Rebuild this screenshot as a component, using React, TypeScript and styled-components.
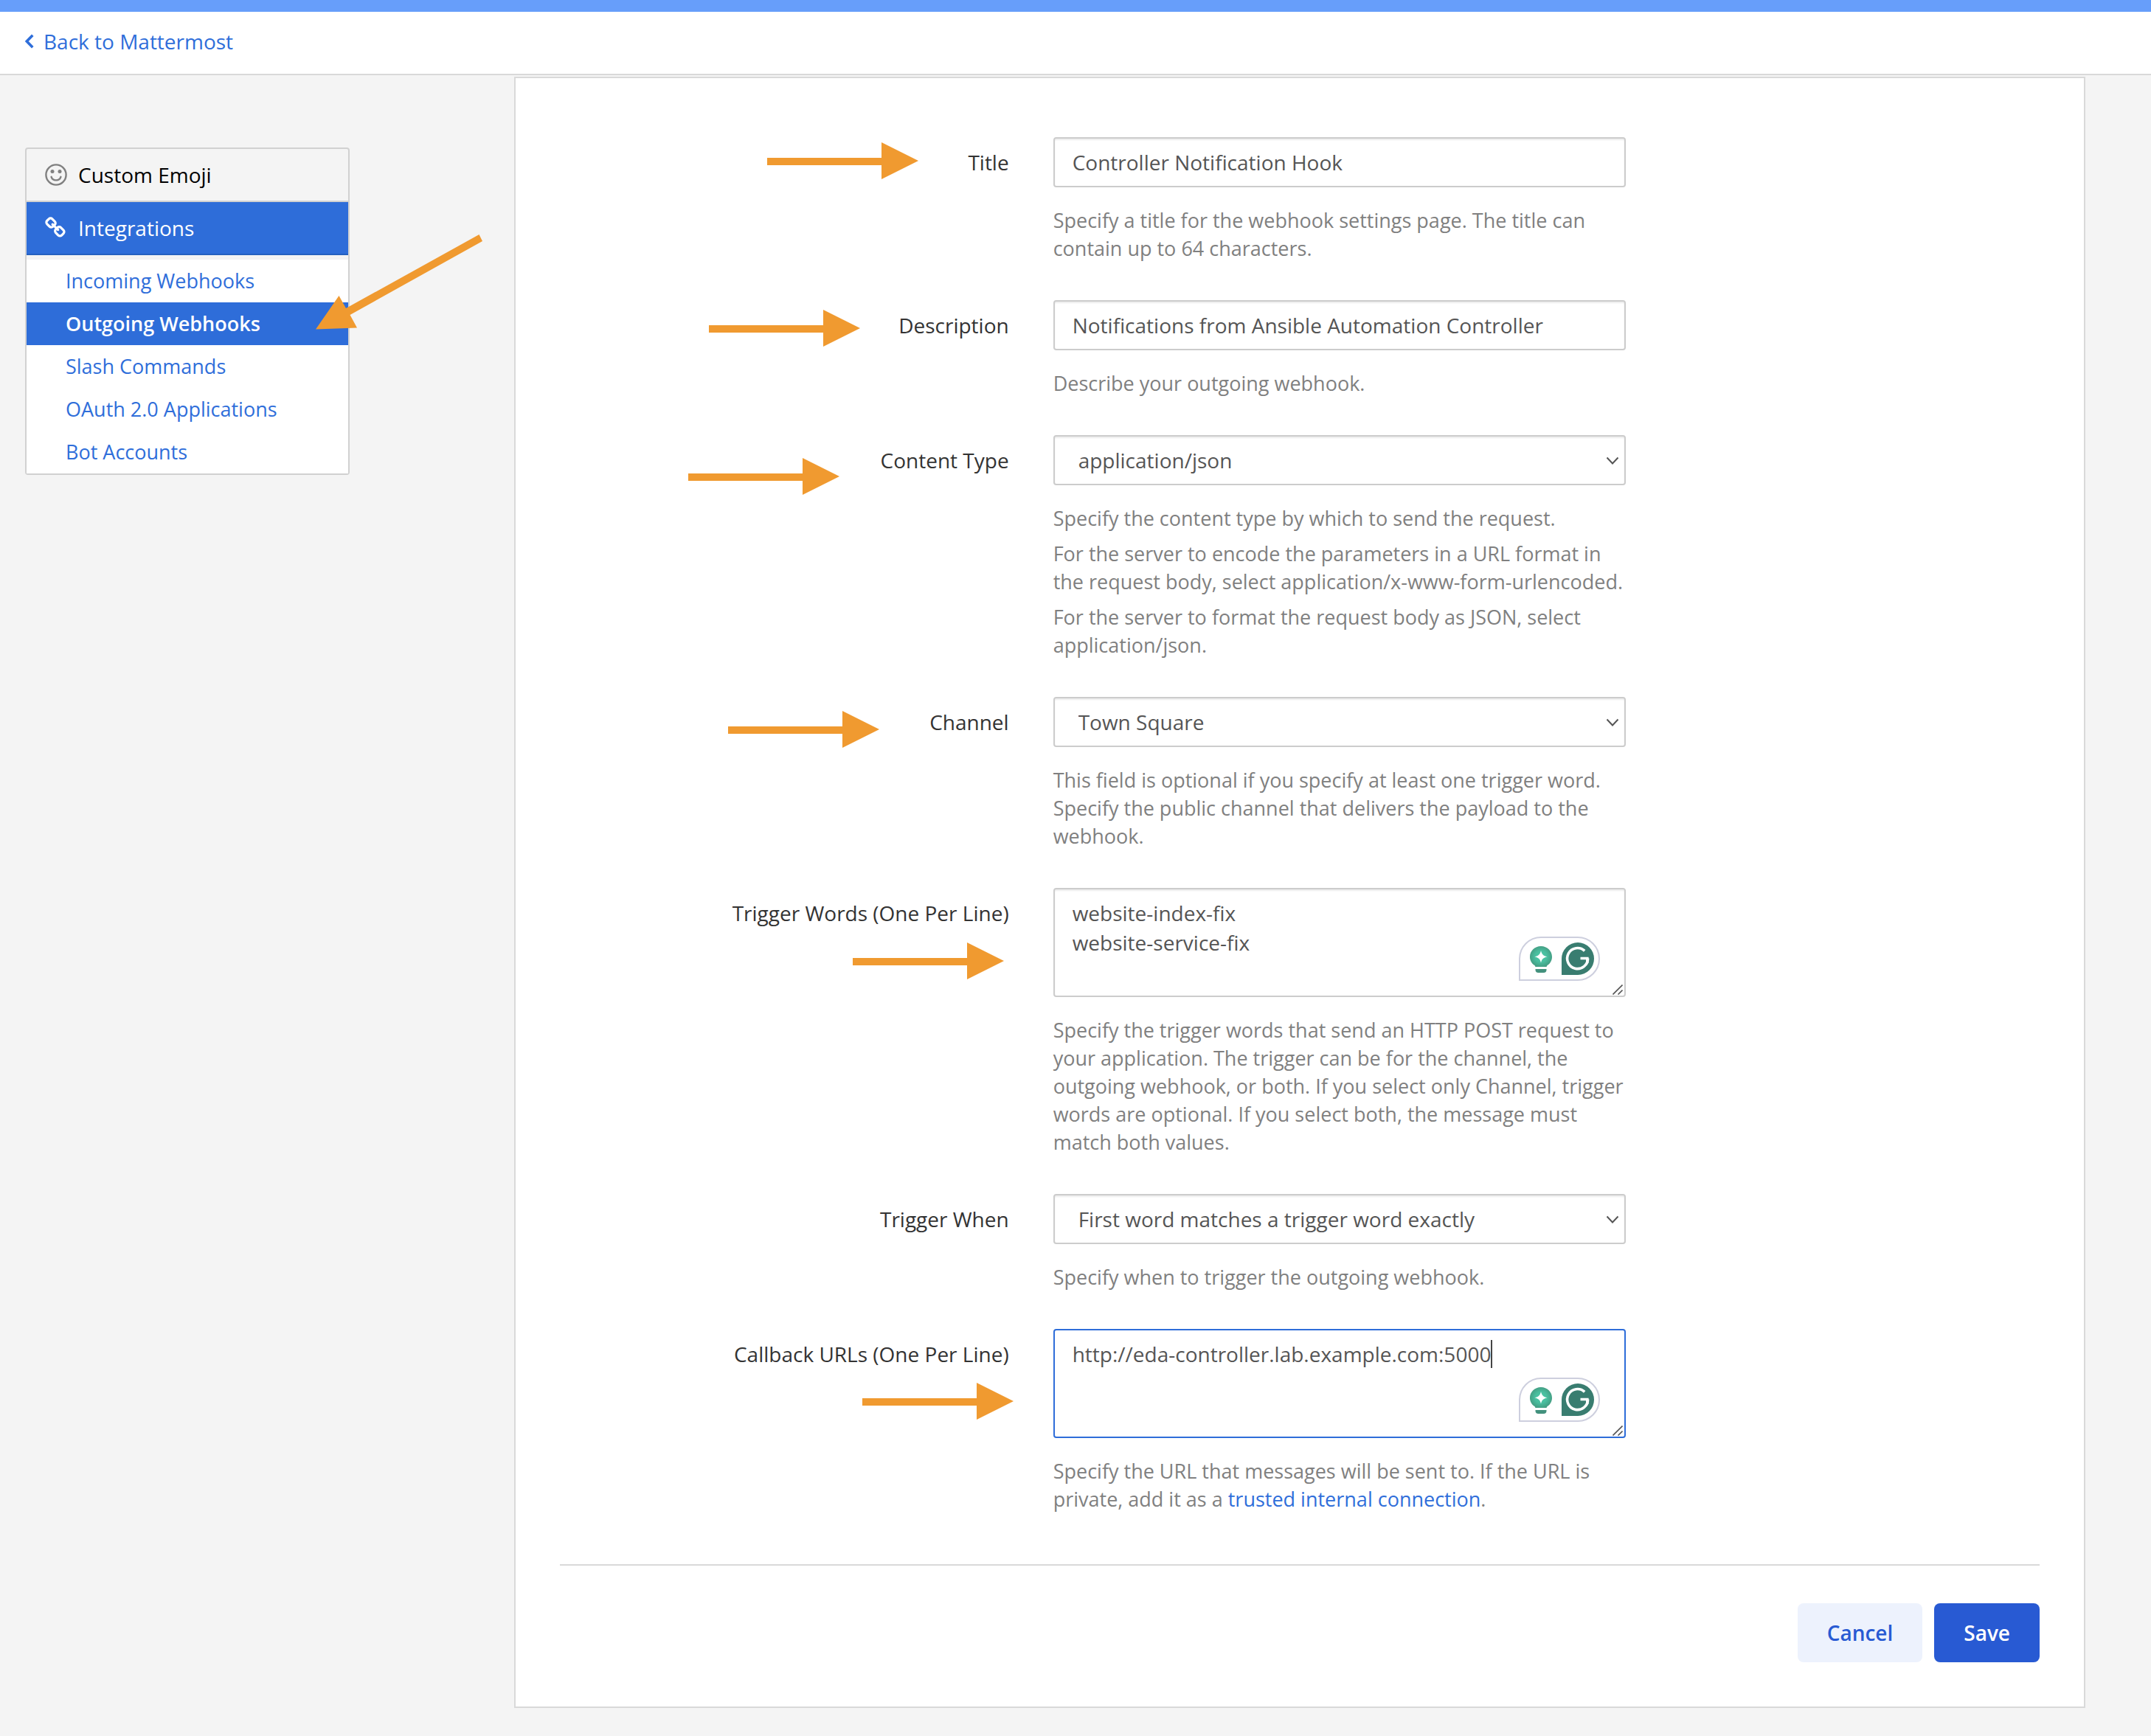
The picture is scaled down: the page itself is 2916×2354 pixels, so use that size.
import React from "react";
import styled, { createGlobalStyle, css } from "styled-components";

const color = {
  page: "#f4f4f4",
  line: "#d9d9d9",
  fieldLine: "#cccccc",
  link: "#2f6eda",
  active: "#2e6dd9",
  primary: "#285ad3",
  label: "#333333",
  value: "#555555",
  help: "#808080",
  arrow: "#f09a30",
};

const GlobalStyle = createGlobalStyle`
  *, *::before, *::after { box-sizing: border-box; }
  html, body { margin: 0; padding: 0; }
  body {
    background: ${color.page};
    color: ${color.label};
    font-family: "Open Sans", sans-serif;
    font-size: 28px;
    line-height: 40px;
  }
  a { color: ${color.link}; text-decoration: none; }
`;

const Page = styled.div`
  min-height: 100vh;
  background: ${color.page};
`;

const AnnouncementBar = styled.div`
  height: 16px;
  background: #679efa;
`;

const Navbar = styled.header`
  display: flex;
  align-items: center;
  height: 86px;
  padding: 0 34px 4px;
  background: #fff;
  border-bottom: 2px solid ${color.line};
`;

const BackLink = styled.a`
  display: flex;
  align-items: center;
  gap: 13px;
`;

const Body = styled.div`
  display: flex;
  align-items: flex-start;
  padding: 2px 89px 38px 34px;
`;

const Sidebar = styled.nav`
  position: relative;
  flex: none;
  width: 440px;
  margin: 96px 223px 0 0;
`;

const Categories = styled.ul`
  margin: 0;
  padding: 0;
  list-style: none;
  border: 2px solid #d1d1d1;
  border-radius: 4px;
`;

const CategoryLink = styled.a<{ $active?: boolean }>`
  display: flex;
  align-items: center;
  gap: 15px;
  height: 72px;
  padding: 0 25px;
  color: #000;
  border-bottom: 2px solid #d1d1d1;
  ${(p) =>
    p.$active &&
    css`
      color: #fff;
      background: ${color.active};
      border-bottom-color: #2560c0;
    `}
`;

const Sections = styled.ul`
  margin: 6px 0 0;
  padding: 0;
  list-style: none;
  background: #fff;
`;

const SectionLink = styled.a<{ $active?: boolean }>`
  display: flex;
  align-items: center;
  height: 58px;
  padding-left: 53px;
  font-size: 27px;
  ${(p) =>
    p.$active &&
    css`
      color: #fff;
      font-weight: 600;
      background: ${color.active};
    `}
`;

const SidebarArrow = styled.svg`
  position: absolute;
  right: -184px;
  top: 110px;
  width: 240px;
  height: 140px;
  pointer-events: none;
`;

const Panel = styled.main`
  flex: 1;
  min-width: 0;
  padding: 80px 60px 60px;
  background: #fff;
  border: 2px solid ${color.line};
`;

const FieldRow = styled.div`
  display: grid;
  grid-template-columns: 4fr 5fr 3fr;
  margin: 0 30px 51px -30px;
  width: 100%;
`;

const LabelCell = styled.div`
  position: relative;
  padding: 14px 30px 0;
  text-align: right;
`;

const FieldCell = styled.div`
  min-width: 0;
  padding: 0 30px;
`;

const ArrowSvg = styled.svg<{ $right: number; $top: number }>`
  position: absolute;
  right: ${(p) => p.$right}px;
  top: ${(p) => p.$top}px;
  width: 205px;
  height: 50px;
  pointer-events: none;
`;

const fieldStyle = css`
  display: block;
  width: 100%;
  margin: 0;
  color: ${color.value};
  font: inherit;
  background: #fff;
  border: 2px solid ${color.fieldLine};
  border-radius: 4px;
  outline: none;
  box-shadow: inset 0 2px 2px rgba(0, 0, 0, 0.075);
`;

const TextInput = styled.input`
  ${fieldStyle}
  height: 68px;
  padding: 12px 24px;
`;

const ControlBox = styled.div`
  position: relative;
`;

const Select = styled.select`
  ${fieldStyle}
  height: 68px;
  padding: 0 56px 0 32px;
  appearance: none;
`;

const SelectChevron = styled.svg`
  position: absolute;
  right: 9px;
  top: 29px;
  width: 18px;
  height: 12px;
  pointer-events: none;
`;

const TextArea = styled.textarea<{ $focused?: boolean }>`
  ${fieldStyle}
  height: 148px;
  padding: 12px 24px;
  resize: none;
  ${(p) =>
    p.$focused &&
    css`
      border-color: ${color.active};
      box-shadow: none;
    `}
`;

const ResizeGrip = styled.svg`
  position: absolute;
  right: 4px;
  bottom: 3px;
  width: 14px;
  height: 14px;
  pointer-events: none;
`;

const Caret = styled.span`
  position: absolute;
  left: 593px;
  top: 15px;
  width: 2px;
  height: 38px;
  background: #444;
`;

const Assistant = styled.div`
  position: absolute;
  right: 35px;
  bottom: 22px;
  display: flex;
  align-items: center;
  gap: 12px;
  width: 110px;
  height: 60px;
  padding-left: 12px;
  background: #fff;
  border: 2px solid #cdcfde;
  border-radius: 30px 30px 30px 0;
`;

const Help = styled.div`
  margin-top: 26px;
  color: ${color.help};
  font-size: 27px;
  line-height: 38px;
  p { margin: 0; }
  p + p { margin-top: 10px; }
`;

const Footer = styled.footer`
  display: flex;
  justify-content: flex-end;
  gap: 16px;
  margin-top: 69px;
  padding-top: 51px;
  border-top: 2px solid ${color.line};
`;

const Button = styled.button<{ $primary?: boolean }>`
  height: 80px;
  padding: 0 40px;
  color: ${(p) => (p.$primary ? "#fff" : color.primary)};
  font: inherit;
  font-weight: 600;
  background: ${(p) => (p.$primary ? color.primary : "#edf2fd")};
  border: 0;
  border-radius: 8px;
`;

const Arrow = ({ right, top }: { right: number; top: number }) => (
  <ArrowSvg $right={right} $top={top} viewBox="0 0 205 50" aria-hidden="true">
    <path d="M0 21H155V0L205 25L155 50V31H0Z" fill={color.arrow} />
  </ArrowSvg>
);

const SmileIcon = () => (
  <svg width="30" height="30" viewBox="0 0 30 30" fill="none" aria-hidden="true">
    <circle cx="15" cy="15" r="13.6" stroke="#808080" strokeWidth="2.4" />
    <circle cx="10" cy="10.4" r="2.5" fill="#808080" />
    <circle cx="20" cy="10.4" r="2.5" fill="#808080" />
    <path d="M8.600 17.800C9.600 21 12 22.400 15 22.400S20.400 21 21.400 17.800" stroke="#808080" strokeWidth="2.400" strokeLinecap="round" />
  </svg>
);

const LinkIcon = () => (
  <svg width="30" height="30" viewBox="0 0 1792 1792" aria-hidden="true">
    <path
      fill="#fff"
      d="M1456 1216q0-40-28-68l-208-208q-28-28-68-28-42 0-72 32 3 3 19 18.500t21.500 21.500 15 19 13 25.500 3.500 27.500q0 40-28 68t-68 28q-15 0-27.500-3.500t-25.500-13-19-15-21.500-21.500-18.500-19q-33 31-33 73 0 40 28 68l206 207q27 27 68 27 40 0 68-26l147-146q28-28 28-67zm-703-705q0-40-28-68l-206-207q-28-28-68-28-39 0-68 27l-147 146q-28 28-28 67 0 40 28 68l208 208q27 27 68 27 42 0 72-31-3-3-19-18.500t-21.500-21.500-15-19-13-25.500-3.500-27.500q0-40 28-68t68-28q15 0 27.500 3.500t25.500 13 19 15 21.500 21.500 18.500 19q33-31 33-73zm895 705q0 120-85 203l-147 146q-83 83-203 83-121 0-204-85l-206-207q-83-83-83-203 0-123 88-209l-88-88q-86 88-208 88-120 0-204-84l-208-208q-84-84-84-204t85-203l147-146q83-83 203-83 121 0 204 85l206 207q83 83 83 203 0 123-88 209l88 88q86-88 208-88 120 0 204 84l208 208q84 84 84 204z"
    />
  </svg>
);

const WritingAssistant = () => (
  <Assistant aria-hidden="true">
    <svg width="32" height="40" viewBox="0 0 32 40">
      <defs>
        <radialGradient id="bulb" cx="50%" cy="50%" r="55%">
          <stop offset="0" stopColor="#4cc9a8" />
          <stop offset="0.5" stopColor="#4abd9e" />
          <stop offset="1" stopColor="#43997f" />
        </radialGradient>
      </defs>
      <path d="M16 3C7.500 3 1 9.500 1 17.500C1 23 4 27 7.500 29L8.500 31H23.500L24.500 29C28 27 31 23 31 17.500C31 9.500 24.500 3 16 3Z" fill="url(#bulb)" />
      <path d="M16 9C17.200 14 19 16 24.500 17.300C19 18.600 17.200 20.600 16 25.600C14.800 20.600 13 18.600 7.500 17.300C13 16 14.800 14 16 9Z" fill="#fff" />
      <path d="M8.500 34H23.500V35Q23.500 39 19.500 39H12.500Q8.500 39 8.500 35Z" fill="#43917d" />
    </svg>
    <svg width="44" height="44" viewBox="0 0 44 44" fill="none">
      <path d="M22 0A22 22 0 0 1 22 44H0V22A22 22 0 0 1 22 0Z" fill="#397d70" />
      <path d="M31.200 11.400A14 14 0 1 0 35.600 21.500" stroke="#fff" strokeWidth="3.600" />
      <path d="M25.500 21.500H36.600M34.800 21.500L34.800 28" stroke="#fff" strokeWidth="3.600" />
    </svg>
  </Assistant>
);

const Grip = () => (
  <ResizeGrip viewBox="0 0 14 14" fill="none" aria-hidden="true">
    <path d="M0.500 13.500L13.500 0.500M7.500 13.500L13.500 7.500" stroke="#555" strokeWidth="1.600" />
  </ResizeGrip>
);

type FieldProps = {
  id: string;
  label: string;
  arrow?: { right: number; top: number };
  help: React.ReactNode;
  children: React.ReactNode;
};

const Field = ({ id, label, arrow, help, children }: FieldProps) => (
  <FieldRow>
    <LabelCell>
      <label htmlFor={id}>{label}</label>
      {arrow && <Arrow {...arrow} />}
    </LabelCell>
    <FieldCell>
      {children}
      <Help>{help}</Help>
    </FieldCell>
  </FieldRow>
);

const SelectField = ({ id, options }: { id: string; options: string[] }) => (
  <ControlBox>
    <Select id={id} defaultValue={options[0]}>
      {options.map((option) => (
        <option key={option}>{option}</option>
      ))}
    </Select>
    <SelectChevron viewBox="0 0 18 12" fill="none" aria-hidden="true">
      <path d="M1.500 1.500L9 9.500L16.500 1.500" stroke="#555" strokeWidth="2" />
    </SelectChevron>
  </ControlBox>
);

const sections = [
  "Incoming Webhooks",
  "Outgoing Webhooks",
  "Slash Commands",
  "OAuth 2.0 Applications",
  "Bot Accounts",
];

export default function App() {
  return (
    <Page>
      <GlobalStyle />
      <AnnouncementBar />
      <Navbar>
        <BackLink href="#">
          <svg width="12" height="20" viewBox="0 0 12 20" fill="none" aria-hidden="true">
            <path d="M10.300 1.800L2.300 10L10.300 18.200" stroke={color.link} strokeWidth="3.600" />
          </svg>
          Back to Mattermost
        </BackLink>
      </Navbar>
      <Body>
        <Sidebar>
          <Categories>
            <li>
              <CategoryLink href="#">
                <SmileIcon />
                Custom Emoji
              </CategoryLink>
            </li>
            <li>
              <CategoryLink href="#" $active>
                <LinkIcon />
                Integrations
              </CategoryLink>
              <Sections>
                {sections.map((name) => (
                  <li key={name}>
                    <SectionLink href="#" $active={name === "Outgoing Webhooks"}>
                      {name}
                    </SectionLink>
                  </li>
                ))}
              </Sections>
            </li>
          </Categories>
          <SidebarArrow viewBox="418 310 240 140" aria-hidden="true">
            <path d="M428 446.500L459.500 401L469 418L649.500 318L654 327L474.500 427L484 444.500Z" fill={color.arrow} />
          </SidebarArrow>
        </Sidebar>
        <Panel>
          <form>
            <Field
              id="displayName"
              label="Title"
              arrow={{ right: 153, top: 7 }}
              help="Specify a title for the webhook settings page. The title can contain up to 64 characters."
            >
              <TextInput id="displayName" defaultValue="Controller Notification Hook" />
            </Field>
            <Field
              id="description"
              label="Description"
              arrow={{ right: 232, top: 13 }}
              help="Describe your outgoing webhook."
            >
              <TextInput id="description" defaultValue="Notifications from Ansible Automation Controller" />
            </Field>
            <Field
              id="contentType"
              label="Content Type"
              arrow={{ right: 260, top: 31 }}
              help={
                <>
                  <p>Specify the content type by which to send the request.</p>
                  <p>
                    For the server to encode the parameters in a URL format in the request body, select
                    application/x-www-form-urlencoded.
                  </p>
                  <p>For the server to format the request body as JSON, select application/json.</p>
                </>
              }
            >
              <SelectField id="contentType" options={["application/json"]} />
            </Field>
            <Field
              id="channelId"
              label="Channel"
              arrow={{ right: 206, top: 19 }}
              help="This field is optional if you specify at least one trigger word. Specify the public channel that delivers the payload to the webhook."
            >
              <SelectField id="channelId" options={["Town Square"]} />
            </Field>
            <Field
              id="triggerWords"
              label="Trigger Words (One Per Line)"
              arrow={{ right: 37, top: 74 }}
              help="Specify the trigger words that send an HTTP POST request to your application. The trigger can be for the channel, the outgoing webhook, or both. If you select only Channel, trigger words are optional. If you select both, the message must match both values."
            >
              <ControlBox>
                <TextArea id="triggerWords" defaultValue={"website-index-fix\nwebsite-service-fix"} />
                <WritingAssistant />
                <Grip />
              </ControlBox>
            </Field>
            <Field id="triggerWhen" label="Trigger When" help="Specify when to trigger the outgoing webhook.">
              <SelectField id="triggerWhen" options={["First word matches a trigger word exactly"]} />
            </Field>
            <Field
              id="callbackUrls"
              label="Callback URLs (One Per Line)"
              arrow={{ right: 24, top: 73 }}
              help={
                <>
                  Specify the URL that messages will be sent to. If the URL is private, add it as a{" "}
                  <a href="#">trusted internal connection</a>.
                </>
              }
            >
              <ControlBox>
                <TextArea
                  id="callbackUrls"
                  $focused
                  spellCheck={false}
                  defaultValue="http://eda-controller.lab.example.com:5000"
                />
                <Caret />
                <WritingAssistant />
                <Grip />
              </ControlBox>
            </Field>
            <Footer>
              <Button type="button">Cancel</Button>
              <Button type="submit" $primary>
                Save
              </Button>
            </Footer>
          </form>
        </Panel>
      </Body>
    </Page>
  );
}
